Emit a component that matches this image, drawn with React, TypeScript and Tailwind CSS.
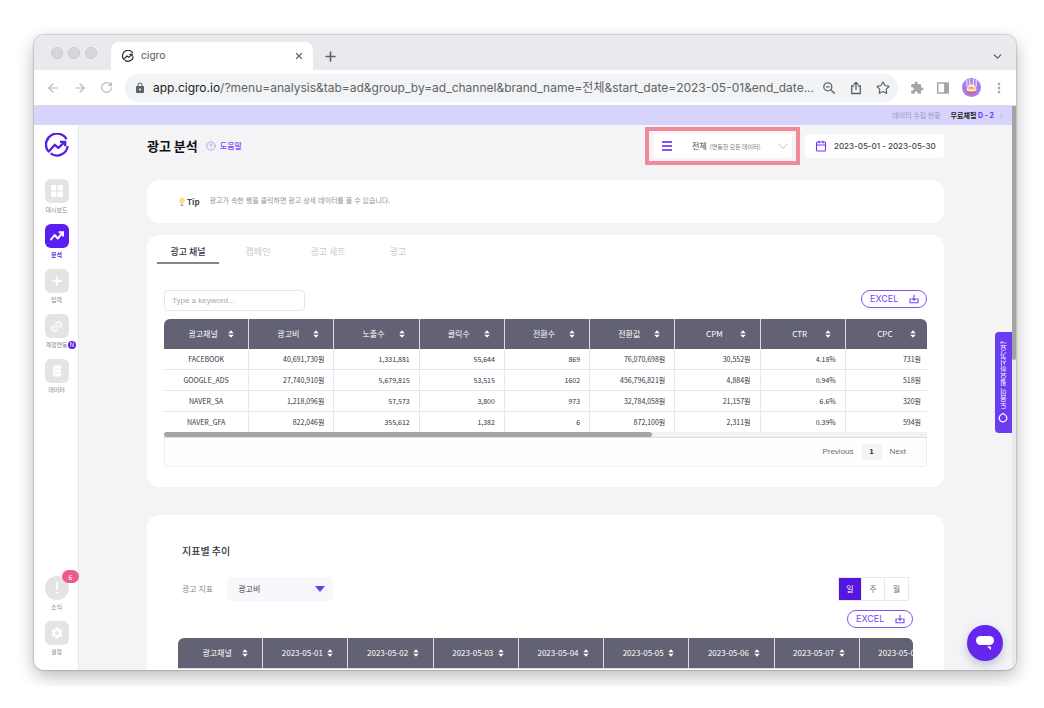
import {useState} from 'react';
import type {ReactNode} from 'react';
import {
  ArrowLeft,
  ArrowRight,
  Calendar,
  ChevronDown,
  ChevronRight,
  CircleHelp,
  Link2,
  Plus,
  RotateCw,
  Star,
  X,
} from 'lucide-react';
import {MdExtension, MdLock, MdMoreVert, MdSettings} from 'react-icons/md';

const columns = ['광고채널', '광고비', '노출수', '클릭수', '전환수', '전환값', 'CPM', 'CTR', 'CPC'];

const rows = [
  ['FACEBOOK', '40,691,730원', '1,331,881', '55,644', '869', '76,070,698원', '30,552원', '4.18%', '731원'],
  ['GOOGLE_ADS', '27,740,910원', '5,679,815', '53,515', '1602', '456,796,821원', '4,884원', '0.94%', '518원'],
  ['NAVER_SA', '1,218,096원', '57,573', '3,800', '973', '32,784,058원', '21,157원', '6.6%', '320원'],
  ['NAVER_GFA', '822,046원', '355,612', '1,382', '6', '872,100원', '2,311원', '0.39%', '594원'],
];

const trendColumns = [
  '광고채널',
  '2023-05-01',
  '2023-05-02',
  '2023-05-03',
  '2023-05-04',
  '2023-05-05',
  '2023-05-06',
  '2023-05-07',
  '2023-05-08',
];

function Logo({className}: {className: string}) {
  return (
    <svg viewBox="0 0 24 24" fill="none" stroke="currentColor" strokeWidth="2.3" className={className}>
      <path d="M21.6 6.200A10.800 10.800 0 1 0 2.400 17l1.400 1.600 6-6.800 3.500 3 6.400-5.600" strokeLinejoin="round" />
      <path d="M5.600 20.400A10.800 10.800 0 0 0 22.700 13.200" />
      <path d="M15 8.800h5.200v4.400" />
    </svg>
  );
}

function TrendIcon() {
  return (
    <svg viewBox="0 0 16 16" fill="none" stroke="currentColor" strokeWidth="2" className="size-4">
      <path d="M2 11.500 5.600 7l3.200 3.500 4-4.800" strokeLinejoin="round" strokeLinecap="round" />
      <path d="M9.800 4.300h4.200v4.200" />
    </svg>
  );
}

function SortIcon() {
  return (
    <svg viewBox="0 0 8 8" fill="currentColor" className="size-2 shrink-0">
      <path d="M4 .3 6.700 3.300H1.300zM4 7.700 1.300 4.700h5.400z" />
    </svg>
  );
}

function DownloadIcon() {
  return (
    <svg viewBox="0 0 10 10" fill="none" stroke="currentColor" strokeWidth="1.1" className="size-[10px]">
      <path d="M5 .8v5.400M3.200 4.500 5 6.300l1.800-1.800M2.500 5H1v3.800h8V5H7.500" />
    </svg>
  );
}

function ExcelButton() {
  return (
    <button
      type="button"
      className="flex h-[18px] w-[66px] items-center justify-between rounded-full border border-[#8450f0] pl-2 pr-[7px] font-[Inter,sans-serif] text-[9px] text-[#7a45ee]"
    >
      EXCEL
      <DownloadIcon />
    </button>
  );
}

function HeadRow({labels}: {labels: string[]}) {
  return (
    <tr className="bg-[#626274] text-[8px] text-white">
      {labels.map((label) => (
        <th key={label} scope="col" className="h-[30px] border-r border-[#dcdce4] p-0 pl-[15px] pr-[13px] font-normal">
          <div className="flex items-center">
            <span className="flex-1 whitespace-nowrap text-center">{label}</span>
            <SortIcon />
          </div>
        </th>
      ))}
    </tr>
  );
}

function NavItem({label, icon, active, round, badge}: {
  label: string;
  icon: ReactNode;
  active?: boolean;
  round?: boolean;
  badge?: ReactNode;
}) {
  return (
    <a
      href="#"
      className={`relative flex h-[45px] w-full flex-col items-center text-[6px] leading-[14px] ${
        active ? 'font-bold text-[#5b1ee6]' : 'text-[#85858c]'
      }`}
    >
      <span
        className={`flex size-6 items-center justify-center text-white ${round ? 'rounded-full' : 'rounded-md'} ${
          active ? 'bg-[#5b1ef0]' : 'bg-[#e4e4e4]'
        }`}
      >
        {icon}
      </span>
      <span>{label}</span>
      {badge}
    </a>
  );
}

function Sidebar() {
  return (
    <nav className="flex w-[45px] shrink-0 flex-col items-center border-r border-[#e6e3fb] bg-white pl-px">
      <Logo className="mb-[22px] mt-2 size-6 text-[#5b1ee6]" />
      <NavItem
        label="대시보드"
        icon={
          <svg viewBox="0 0 12 12" fill="currentColor" className="size-3">
            <rect width="5.400" height="5.400" rx="1.300" />
            <rect x="6.600" width="5.400" height="5.400" rx="1.300" />
            <rect y="6.600" width="5.400" height="5.400" rx="1.300" />
            <rect x="6.600" y="6.600" width="5.400" height="5.400" rx="1.300" />
          </svg>
        }
      />
      <NavItem label="분석" active icon={<TrendIcon />} />
      <NavItem label="입력" icon={<Plus size={14} strokeWidth={3} />} />
      <NavItem
        label="계정연동"
        icon={<Link2 size={13} strokeWidth={2.4} className="-rotate-45" />}
        badge={
          <span className="absolute right-[2px] top-[27px] flex size-2 items-center justify-center rounded-full bg-[#5b1ee6] text-[6px] font-normal text-white">
            N
          </span>
        }
      />
      <NavItem
        label="데이터"
        icon={
          <svg viewBox="0 0 10 12" className="h-3 w-[10px]">
            <path fill="currentColor" d="M1 .5h8v3.200H1zM1 4.400h8v3.200H1zM1 8.300h8v3.200H1z" />
            <path stroke="#e4e4e4" strokeWidth=".8" d="M2.400 2.100h1.200M2.400 6h1.200M2.400 9.900h1.200" />
          </svg>
        }
      />
      <div className="mt-auto w-full pb-1">
        <NavItem
          label="소식"
          round
          icon={
            <svg viewBox="0 0 4 12" fill="currentColor" className="h-3 w-1">
              <rect x="1" width="2" height="8" rx="1" />
              <circle cx="2" cy="10.800" r="1.100" />
            </svg>
          }
          badge={
            <span className="absolute -right-px -top-[6px] flex h-[13px] w-[17px] items-center justify-center rounded-full bg-[#ee5b8b] text-[7px] text-white">
              6
            </span>
          }
        />
        <NavItem label="설정" icon={<MdSettings size={14} />} />
      </div>
    </nav>
  );
}

function BrowserBar() {
  return (
    <>
      <div className="flex h-[35px] shrink-0 items-end bg-[#e8eaed] pr-3 text-[#5f6368]">
        <div className="mb-[11px] ml-[17px] flex gap-[5px]">
          <span className="size-3 rounded-full border border-[#c9cacc] bg-[#d6d7d9]" />
          <span className="size-3 rounded-full border border-[#c9cacc] bg-[#d6d7d9]" />
          <span className="size-3 rounded-full border border-[#c9cacc] bg-[#d6d7d9]" />
        </div>
        <div className="ml-[14px] flex h-7 w-[202px] items-center rounded-t-lg bg-white pl-[11px] pr-[9px] font-[Roboto,sans-serif] text-[11px]">
          <Logo className="mr-[7px] size-3 text-[#222]" />
          cigro
          <button type="button" aria-label="Close tab" className="ml-auto">
            <X size={10} strokeWidth={2.600} />
          </button>
        </div>
        <button type="button" aria-label="New tab" className="mb-[6px] ml-[10px]">
          <Plus size={15} strokeWidth={2.600} />
        </button>
        <button type="button" aria-label="Search tabs" className="mb-[7px] ml-auto">
          <ChevronDown size={13} strokeWidth={2.600} />
        </button>
      </div>
      <div className="flex h-9 shrink-0 items-center border-b border-[#dcdde2] bg-white pl-3 pr-[11px]">
        <div className="flex items-center gap-[13px] text-[#b4b6b9]">
          <ArrowLeft size={14} />
          <ArrowRight size={14} />
          <RotateCw size={13} />
        </div>
        <div className="ml-3 flex h-7 min-w-0 flex-1 items-center rounded-full bg-[#f1f3f4] px-2 text-[#5f6368]">
          <MdLock size={12} className="ml-px shrink-0" />
          <p className="ml-[7px] min-w-0 flex-1 overflow-hidden whitespace-nowrap font-[Inter,'Noto_Sans_CJK_KR',sans-serif] text-[12px]">
            <span className="text-[#202124]">app.cigro.io</span>
            /?menu=analysis&amp;tab=ad&amp;group_by=ad_channel&amp;brand_name=전체&amp;start_date=2023-05-01&amp;end_date...
          </p>
          <div className="flex shrink-0 items-center gap-[13px]">
            <svg viewBox="0 0 14 14" fill="none" stroke="currentColor" strokeWidth="1.300" className="size-[14px]">
              <circle cx="5.800" cy="5.800" r="4" />
              <path d="m8.800 8.800 4 4M4 5.800h3.600" />
            </svg>
            <svg viewBox="0 0 14 14" fill="none" stroke="currentColor" strokeWidth="1.300" className="size-[14px]">
              <path d="M5 5H2.700v7.500h8.600V5H9M7 9V1.500M4.600 3.800 7 1.400l2.400 2.400" />
            </svg>
            <Star size={14} />
          </div>
        </div>
        <div className="ml-3 flex items-center gap-3 text-[#a4a6a9]">
          <MdExtension size={14} />
          <svg viewBox="0 0 14 14" className="size-[14px]">
            <path fill="none" stroke="currentColor" strokeWidth="1.500" d="M1.700 2h10.600v10H1.700z" />
            <path fill="currentColor" d="M8 2h4.500v10H8z" />
          </svg>
          <svg viewBox="0 0 20 20" className="size-[19px]">
            <circle cx="10" cy="10" r="10" fill="#a67cf3" />
            <path d="M5 9V2M8 8V1M12 8V1M15 9V2" stroke="#e5d8e4" strokeWidth="1.500" />
            <path d="M10 6.500c3 0 5 2.500 5 5.500 0 2.500-2 4-5 4s-5-1.500-5-4c0-3 2-5.500 5-5.500z" fill="#f6e9df" />
            <path d="M7.500 9v3M13 10v2.500" stroke="#f0b545" strokeWidth="1.600" />
            <path d="M5 13.500c1.500 1 8.500 1 10 0-.5 2-2.500 3-5 3s-4.500-1-5-3zM9.300 9.500h1.600v2H9.300z" fill="#e25b50" />
          </svg>
          <MdMoreVert size={16} className="-mx-[2px]" />
        </div>
      </div>
    </>
  );
}

function PageHeader() {
  return (
    <header className="flex items-center">
      <h1 className="text-[13px] font-bold text-[#111]">광고 분석</h1>
      <a href="#" className="ml-2 flex items-center gap-1 text-[8px] font-medium text-[#7a4bf5]">
        <CircleHelp size={10} strokeWidth={1.600} className="opacity-70" />
        도움말
      </a>
      <div className="ml-auto border-4 border-[#f08a98] px-1 py-[3px]">
        <button
          type="button"
          aria-haspopup="listbox"
          className="flex h-6 w-[139px] items-center rounded bg-white pl-[9px] pr-1 text-[8px] text-[#444]"
        >
          <svg viewBox="0 0 10 10" fill="none" stroke="#5b1ee6" strokeWidth="1.600" className="size-[10px]">
            <path d="M0 1h10M0 5h10M0 9h10" />
          </svg>
          <span className="ml-5">전체</span>
          <span className="ml-[3px] whitespace-nowrap text-[6px] text-[#777]">(연동한 모든 데이터)</span>
          <svg viewBox="0 0 10 6" fill="none" stroke="#b5b5bb" strokeWidth=".8" className="ml-auto h-[6px] w-[10px]">
            <path d="m.5.5 4.500 5 4.500-5" />
          </svg>
        </button>
      </div>
      <button
        type="button"
        className="ml-[5px] flex h-6 w-[139px] items-center rounded bg-white pl-[10px] font-[Inter,sans-serif] text-[8px] font-medium text-[#444]"
      >
        <Calendar size={12} strokeWidth={2.200} className="mr-[7px] text-[#7036f0]" />
        2023-05-01 - 2023-05-30
      </button>
    </header>
  );
}

function ChannelCard() {
  const tabs = ['광고 채널', '캠페인', '광고 세트', '광고'];
  const [tab, setTab] = useState(tabs[0]);

  return (
    <section className="mt-3 rounded-xl bg-white pb-5">
      <div role="tablist" className="flex gap-2 px-[10px]">
        {tabs.map((name) => (
          <button
            key={name}
            type="button"
            role="tab"
            aria-selected={tab === name}
            onClick={() => setTab(name)}
            className={`h-[29px] w-[62px] border-b-2 pt-[6px] text-[9px] ${
              tab === name ? 'border-[#85858f] font-medium text-[#333344]' : 'border-transparent text-[#c9cacf]'
            }`}
          >
            {name}
          </button>
        ))}
      </div>
      <div className="mt-[26px] px-[17px]">
        <div className="mb-2 flex items-start justify-between">
          <input
            type="text"
            aria-label="Search keyword"
            placeholder="Type a keyword..."
            className="h-[21px] w-[141px] rounded-sm border border-[#e6e6ea] px-[7px] font-['Liberation_Sans',sans-serif] text-[8px] placeholder:text-[#a9a9ad]"
          />
          <ExcelButton />
        </div>
        <div className="overflow-hidden rounded-t-md">
          <table className="w-[767px] table-fixed border-separate border-spacing-0">
            <thead>
              <HeadRow labels={columns} />
            </thead>
            <tbody className="text-[7px] leading-[10px] text-[#33333d]">
              {rows.map((row) => (
                <tr key={row[0]} className="group">
                  {row.map((value, index) => (
                    <td
                      key={columns[index]}
                      className={`h-[21px] border-b border-r border-[#e6e6ee] p-0 group-last:h-5 group-last:border-b-0 ${
                        index === 0 ? 'text-center' : 'pr-[9px] text-right'
                      }`}
                    >
                      {value}
                    </td>
                  ))}
                </tr>
              ))}
            </tbody>
          </table>
        </div>
        <div className="h-[6px] border-b border-[#dedede] bg-[#f1f1f1]">
          <div className="h-[5px] w-[64%] rounded-full bg-[#a5a5a5]" />
        </div>
        <div className="flex h-[29px] items-center justify-end rounded-b border border-t-0 border-[#efeff1] bg-[#fefefe] pr-5 font-['Liberation_Sans',sans-serif] text-[8px] text-[#6b6b74]">
          <button type="button">Previous</button>
          <button type="button" className="mx-2 h-4 w-5 bg-[#f5f5f5] font-bold text-[#333]">1</button>
          <button type="button">Next</button>
        </div>
      </div>
    </section>
  );
}

function TrendCard() {
  const units = ['일', '주', '월'];
  const [unit, setUnit] = useState(units[0]);

  return (
    <section className="mt-7 rounded-xl bg-white pb-8 pl-[31px] pr-[31px] pt-7">
      <h2 className="pl-1 text-[10px] font-medium leading-4 text-[#333340]">지표별 추이</h2>
      <div className="mt-[18px] flex items-center px-1 text-[8px]">
        <label htmlFor="metric" className="mr-[14px] text-[#8d8d95]">광고 지표</label>
        <div className="relative">
          <select id="metric" className="h-6 w-[106px] appearance-none rounded bg-[#f7f7fc] px-[11px] text-[#44444c]">
            <option>광고비</option>
          </select>
          <svg viewBox="0 0 10 6" className="pointer-events-none absolute right-2 top-[9px] h-[6px] w-[10px]">
            <path d="M0 0h10L5 6z" fill="#7036f0" />
          </svg>
        </div>
        <div className="ml-auto flex border border-[#e8e9ee]">
          {units.map((name) => (
            <button
              key={name}
              type="button"
              onClick={() => setUnit(name)}
              className={`h-[22px] w-[23px] border-r border-[#e8e9ee] last:border-r-0 ${
                unit === name ? 'bg-[#5516e0] text-white' : 'text-[#77777f]'
              }`}
            >
              {name}
            </button>
          ))}
        </div>
      </div>
      <div className="mb-[10px] mt-[9px] flex justify-end">
        <ExcelButton />
      </div>
      <div className="overflow-hidden rounded-t-md border-b border-[#dcdce4]">
        <table className="w-[767px] table-fixed border-separate border-spacing-0">
          <thead>
            <HeadRow labels={trendColumns} />
          </thead>
        </table>
      </div>
    </section>
  );
}

export default function App() {
  return (
    <div className="h-screen bg-white pb-[22px] font-['Noto_Sans_CJK_KR',sans-serif]">
      <div className="h-full overflow-hidden pb-4 pl-[34px] pr-7 pt-[35px]">
        <div className="relative flex h-full flex-col overflow-hidden rounded-[10px] bg-[#f4f4f7] shadow-[0_6px_18px_rgba(0,0,0,0.28),0_0_1px_1px_rgba(0,0,0,0.14)]">
          <BrowserBar />
          <div className="flex min-h-0 flex-1">
            <div className="flex min-w-0 flex-1 flex-col">
              <div className="flex h-[19px] shrink-0 items-center justify-end bg-[#d6d3fc] pr-[6px] text-[7px]">
                <a href="#" className="text-[#9b99b4]">데이터 수집 현황</a>
                <a href="#" className="ml-[10px] flex items-center font-bold text-[#222]">
                  <span>
                    무료체험 <span className="font-[Inter,sans-serif] text-[#6a30ee]">D - 2</span>
                  </span>
                  <ChevronRight size={9} className="ml-[3px] text-[#a8a6c0]" />
                </a>
              </div>
              <div className="flex min-h-0 flex-1">
                <Sidebar />
                <main className="min-w-0 flex-1 overflow-hidden pl-[68px] pr-[68px] pt-[2px]">
                  <PageHeader />
                  <section className="mt-[15px] flex h-[43px] items-center rounded-xl bg-white pl-[31px] text-[7px]">
                    <svg viewBox="0 0 8 10" className="h-[10px] w-2">
                      <path d="M4 .5a3 3 0 0 0-1.600 5.400V7h3.200V5.900A3 3 0 0 0 4 .5z" fill="#fbdf8e" />
                      <path d="M2.600 7.600h2.800v1.300H2.600z" fill="#aaa69a" />
                    </svg>
                    <strong className="ml-px text-[8px] font-bold text-[#44444d]">Tip</strong>
                    <p className="ml-[10px] font-[Inter,'Noto_Sans_CJK_KR',sans-serif] text-[#92929a]">
                      광고가 속한 행을 클릭하면 광고 상세 데이터를 볼 수 있습니다.
                    </p>
                  </section>
                  <ChannelCard />
                  <TrendCard />
                </main>
              </div>
            </div>
            <div className="w-1 bg-[#e9e9eb]">
              <div className="h-[45%] w-1 rounded-b-full bg-[#a3a3a3]" />
            </div>
          </div>
          <button
            type="button"
            className="absolute right-1 top-[297px] flex h-[101px] w-[17px] rotate-180 items-center justify-center gap-1 rounded-r-sm bg-[#6a3df2] text-[7px] text-white [writing-mode:vertical-rl]"
          >
            <svg viewBox="0 0 10 10" fill="none" stroke="currentColor" strokeWidth="1.200" className="size-[10px]">
              <path d="M3.500 8.500a3.800 3.800 0 1 1 3 0L5 9.700z" />
            </svg>
            도움이 필요하신가요?
          </button>
          <button
            type="button"
            aria-label="Chat"
            className="absolute bottom-[9px] right-[13px] flex size-9 items-center justify-center rounded-full bg-[#6527ee] shadow-[0_4px_10px_rgba(60,80,110,0.3)]"
          >
            <svg viewBox="0 0 20 16" fill="#fff" className="h-4 w-5">
              <rect x="1" y="1" width="18" height="9" rx="4.500" />
              <path d="M12 11.500h4V15z" />
            </svg>
          </button>
        </div>
      </div>
    </div>
  );
}
